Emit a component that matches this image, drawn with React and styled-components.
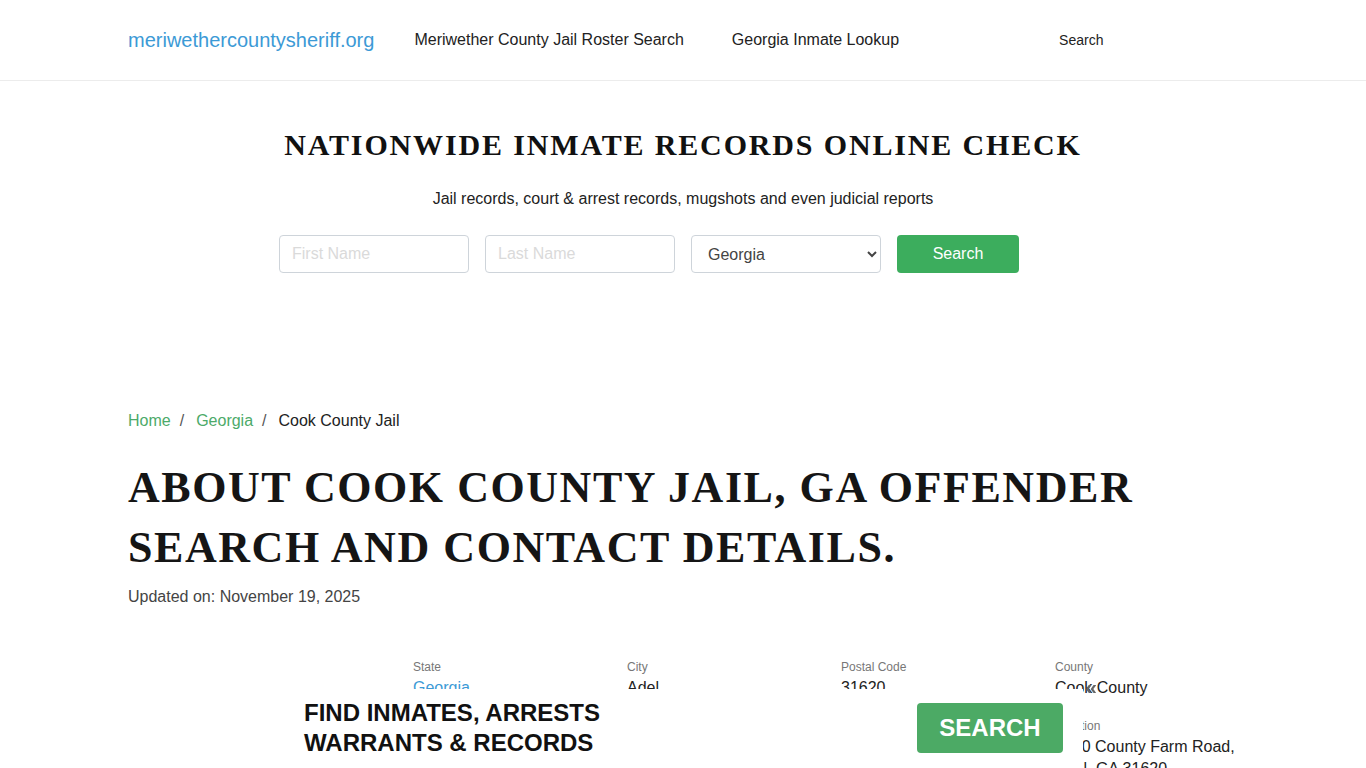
import React from 'react'
import styled, { createGlobalStyle } from 'styled-components'

const GlobalStyle = createGlobalStyle`
    body {
        margin: 0;
        background: #fff;
        font-family: "Liberation Sans", Arial, sans-serif;
        color: #222;
    }
    * { box-sizing: border-box; }
`;

const Container = styled.div`
    width: 1110px;
    margin: 0 auto;
`;

const Header = styled.header`
    height: 81px;
    border-bottom: 1px solid #ececec;
`;

const NavBar = styled(Container)`
    height: 80px;
    display: flex;
    align-items: center;
`;

const Logo = styled.a`
    font-size: 20px;
    color: #3c9ad6;
    text-decoration: none;
    margin-right: 40px;
`;

const NavLink = styled.a`
    color: #222;
    text-decoration: none;
    margin-right: ${props => props.gap || 48}px;
    font-size: ${props => props.small ? '14px' : '16px'};
`;

const Hero = styled.section`
    padding-top: 46px;
    text-align: center;
    height: 310px;
`;

const HeroTitle = styled.h2`
    margin: 0;
    font-family: "Liberation Serif", "Times New Roman", serif;
    font-weight: 700;
    font-size: 30px;
    line-height: 36px;
    letter-spacing: 1.85px;
    color: #111;
    text-transform: uppercase;
`;

const HeroText = styled.p`
    margin: 24px 0 0;
    font-size: 16px;
    line-height: 24px;
    color: #222;
`;

const SearchForm = styled.form`
    margin-top: 24px;
    padding-right: 68px;
    display: flex;
    justify-content: center;
    gap: 16px;
`;

const Field = styled.input`
    width: 190px;
    height: 38px;
    border: 1px solid #ced4da;
    border-radius: 4px;
    padding: 0 12px;
    font-size: 16px;
    font-family: "Liberation Sans", Arial, sans-serif;
    &::placeholder { color: #dadada; }
`;

const Select = styled.select`
    width: 190px;
    height: 38px;
    border: 1px solid #ced4da;
    border-radius: 4px;
    padding: 0 12px;
    font-size: 16px;
    color: #444;
    background: #fff;
    font-family: "Liberation Sans", Arial, sans-serif;
`;

const Button = styled.button`
    width: 122px;
    height: 38px;
    border: none;
    border-radius: 4px;
    background: #3cad5d;
    color: #fff;
    font-size: 16px;
    font-family: "Liberation Sans", Arial, sans-serif;
`;

const Crumbs = styled.nav`
    display: flex;
    align-items: center;
    font-size: 16px;
    line-height: 24px;
    margin-top: 18px;
`;

const Crumb = styled.a`
    color: ${props => props.active ? '#222' : '#4caa69'};
    text-decoration: none;
`;

const Sep = styled.span`
    color: #555;
    padding: 0 12px 0 9px;
`;

const Title = styled.h1`
    margin: 25px 0 0;
    font-family: "Liberation Serif", "Times New Roman", serif;
    font-weight: 700;
    font-size: 44px;
    line-height: 60px;
    letter-spacing: 1.55px;
    color: #151515;
    text-transform: uppercase;
`;

const Updated = styled.p`
    margin: 7px 0 0;
    font-size: 16px;
    line-height: 24px;
    color: #444;
`;

const Details = styled.div`
    margin-top: 48px;
    padding-left: 285px;
    display: grid;
    grid-template-columns: 214px 214px 214px 1fr;
    row-gap: 17px;
`;

const Label = styled.div`
    font-size: 12px;
    line-height: 20px;
    color: #777;
`;

const Value = styled.div`
    font-size: 16px;
    line-height: 22px;
    color: ${props => props.link ? '#3c9ad6' : '#222'};
`;

const Banner = styled.div`
    position: fixed;
    left: 283px;
    bottom: 0;
    width: 800px;
    height: 79px;
    background: #fff;
    display: flex;
    align-items: center;
    justify-content: space-between;
    padding: 0 20px 2px 21px;
`;

const BannerText = styled.div`
    font-size: 24px;
    line-height: 30px;
    font-weight: 700;
    color: #111;
    text-transform: uppercase;
`;

const BannerButton = styled.button`
    width: 146px;
    height: 50px;
    border: none;
    border-radius: 4px;
    background: #4caa65;
    color: #fff;
    font-size: 24px;
    font-weight: 700;
    font-family: "Liberation Sans", Arial, sans-serif;
`;

const Close = styled.span`
    position: absolute;
    top: -12px;
    right: -14px;
    font-size: 21px;
    font-weight: 700;
    color: #666;
    line-height: 20px;
`;

const details = [
    { label: 'State', value: 'Georgia', link: true },
    { label: 'City', value: 'Adel' },
    { label: 'Postal Code', value: '31620' },
    { label: 'County', value: 'Cook County' },
    { label: 'Phone', value: '229-896-7471' },
    { label: 'Facility', value: 'County Jail' },
    { label: 'Capacity', value: '120' },
    { label: 'Location', value: '1000 County Farm Road, Adel, GA 31620' },
]

function App() {
    return (
        <>
            <GlobalStyle />
            <Header>
                <NavBar>
                    <Logo href="#">meriwethercountysheriff.org</Logo>
                    <NavLink href="#">Meriwether County Jail Roster Search</NavLink>
                    <NavLink href="#" gap={160}>Georgia Inmate Lookup</NavLink>
                    <NavLink href="#" small>Search</NavLink>
                </NavBar>
            </Header>

            <Hero>
                <HeroTitle>Nationwide Inmate Records Online Check</HeroTitle>
                <HeroText>Jail records, court &amp; arrest records, mugshots and even judicial reports</HeroText>
                <SearchForm onSubmit={e => e.preventDefault()}>
                    <Field placeholder="First Name" />
                    <Field placeholder="Last Name" />
                    <Select defaultValue="Georgia">
                        <option>Georgia</option>
                        <option>Alabama</option>
                        <option>Florida</option>
                    </Select>
                    <Button>Search</Button>
                </SearchForm>
            </Hero>

            <Container>
                <Crumbs>
                    <Crumb href="#">Home</Crumb>
                    <Sep>/</Sep>
                    <Crumb href="#">Georgia</Crumb>
                    <Sep>/</Sep>
                    <Crumb active>Cook County Jail</Crumb>
                </Crumbs>
                <Title>About Cook County Jail, GA Offender Search and Contact Details.</Title>
                <Updated>Updated on: November 19, 2025</Updated>

                <Details>
                    {details.map(d => (
                        <div key={d.label}>
                            <Label>{d.label}</Label>
                            <Value link={d.link}>{d.value}</Value>
                        </div>
                    ))}
                </Details>
                <div style={{ height: 200 }} />
            </Container>

            <Banner>
                <BannerText>Find inmates, arrests<br />warrants &amp; records</BannerText>
                <BannerButton>SEARCH</BannerButton>
                <Close>«</Close>
            </Banner>
        </>
    )
}

export default App
